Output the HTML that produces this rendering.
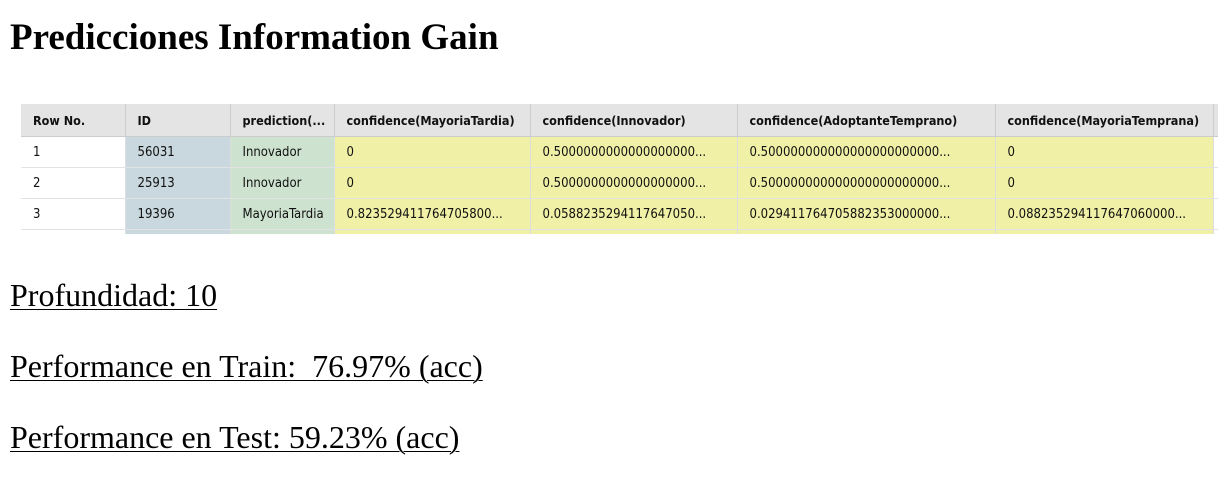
<!DOCTYPE html>
<html><head><style>
body{margin:0;background:#fff;width:1232px;height:484px;overflow:hidden;position:relative;font-family:"Liberation Serif",serif;}
h1{position:absolute;left:10px;top:14px;margin:0;font-size:37px;font-weight:bold;line-height:48px;}
.p{position:absolute;left:10px;font-size:32px;text-decoration:underline;line-height:38px;text-decoration-thickness:1px;text-underline-offset:3px}
.t{position:absolute;left:21px;top:104px;width:1197px;height:130px;overflow:hidden;font-family:"DejaVu Sans Condensed","DejaVu Sans",sans-serif;font-size:13px;color:#111;}
table{border-collapse:collapse;table-layout:fixed;width:1197px;}
td{height:30px;border-right:1px solid #ddd;border-bottom:1px solid #e2e2e2;padding:0 0 0 12px;white-space:nowrap;overflow:hidden;}
tr.h td{height:32px;background:#e4e4e4;font-weight:bold;font-size:12.5px;border-right:1px solid #ccc;border-bottom:1px solid #ccc}
td.w{background:#fff}td.b{background:#c8d8de}td.g{background:#cde2cf}td.y{background:#f0f0a6}
</style></head><body>
<h1>Predicciones Information Gain</h1>
<div class="t"><table>
<colgroup><col style="width:104px"><col style="width:105px"><col style="width:104px"><col style="width:196px"><col style="width:207px"><col style="width:258px"><col style="width:218px"><col style="width:5px"></colgroup>
<tr class="h"><td>Row No.</td><td>ID</td><td>prediction(...</td><td>confidence(MayoriaTardia)</td><td>confidence(Innovador)</td><td>confidence(AdoptanteTemprano)</td><td>confidence(MayoriaTemprana)</td><td></td></tr>
<tr><td class="w">1</td><td class="b">56031</td><td class="g">Innovador</td><td class="y">0</td><td class="y">0.5000000000000000000...</td><td class="y">0.500000000000000000000000...</td><td class="y">0</td><td class="w"></td></tr>
<tr><td class="w">2</td><td class="b">25913</td><td class="g">Innovador</td><td class="y">0</td><td class="y">0.5000000000000000000...</td><td class="y">0.500000000000000000000000...</td><td class="y">0</td><td class="w"></td></tr>
<tr><td class="w">3</td><td class="b">19396</td><td class="g">MayoriaTardia</td><td class="y">0.823529411764705800...</td><td class="y">0.0588235294117647050...</td><td class="y">0.029411764705882353000000...</td><td class="y">0.088235294117647060000...</td><td class="w"></td></tr>
<tr><td class="w"></td><td class="b"></td><td class="g"></td><td class="y"></td><td class="y"></td><td class="y"></td><td class="y"></td><td class="w"></td></tr>
</table></div>
<div class="p" style="top:276px">Profundidad: 10</div>
<div class="p" style="top:347px">Performance en Train:&nbsp; 76.97% (acc)</div>
<div class="p" style="top:418px">Performance en Test: 59.23% (acc)</div>
</body></html>
